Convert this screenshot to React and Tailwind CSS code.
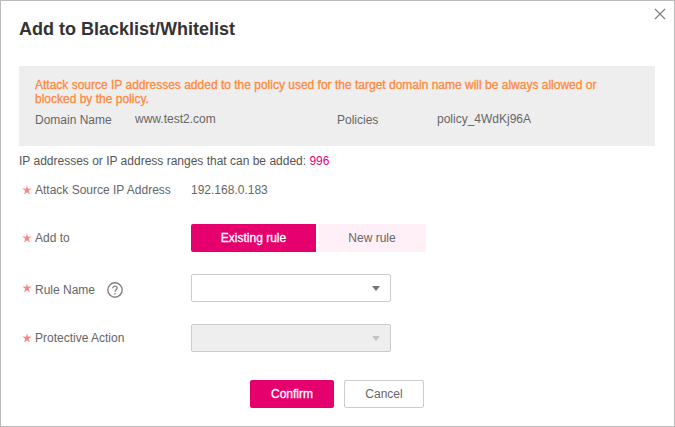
import React from "react";

const Star = () => (
  <span className="w-[16px] pl-[3px] shrink-0 flex items-center">
    <svg width="10" height="10" viewBox="0 0 10 10" className="block"><path d="M5 .2 L5.9 3.7 L9.8 3.6 L6.6 5.8 L8 9.6 L5 7.2 L2 9.6 L3.4 5.8 L.2 3.6 L4.1 3.7 Z" fill="#ff8080" /></svg>
  </span>
);

const Caret = ({ color }) => (
  <svg width="8" height="5" viewBox="0 0 8 5" className="shrink-0"><path d="M0 0H8L4 5Z" fill={color} /></svg>
);

export default function App() {
  return (
    <div className="relative w-[675px] h-[427px] bg-white border border-[#bbbbbb] font-['Liberation_Sans',Arial,sans-serif] text-[12px] text-[#666666] overflow-hidden">
      <button className="absolute right-[8px] top-[7px]" aria-label="Close">
        <svg width="12" height="12" viewBox="0 0 12 12" className="block"><path d="M1 1 L11 11 M11 1 L1 11" stroke="#808080" strokeWidth="1.2" fill="none" /></svg>
      </button>
      <div className="pl-[18px] pr-[19px] pt-[17px]">
        <h1 className="text-[18px] leading-[22px] font-bold text-[#333333]">Add to Blacklist/Whitelist</h1>
        <div className="mt-[26px] h-[80px] bg-[#eeeeee] pl-[16px] pr-[16px] pt-[12px]">
          <p className="text-[#ff8a3c] leading-[14px] [-webkit-text-stroke:0.3px]">
            Attack source IP addresses added to the policy used for the target domain name will be always allowed or blocked by the policy.
          </p>
          <div className="flex mt-[6px] leading-[14px] h-[16px]">
            <span className="w-[100px] pt-[1px]">Domain Name</span>
            <span className="w-[202px]">www.test2.com</span>
            <span className="w-[100px] pt-[1px]">Policies</span>
            <span>policy_4WdKj96A</span>
          </div>
        </div>
        <p className="mt-[8px] leading-[14px] text-[#555555]">
          IP addresses or IP address ranges that can be added: <span className="text-[#e6007a]">996</span>
        </p>
        <div className="mt-[15px] flex items-center h-[14px]">
          <Star />
          <span className="w-[156px]">Attack Source IP Address</span>
          <span>192.168.0.183</span>
        </div>
        <div className="mt-[27px] flex items-center h-[28px]">
          <Star />
          <span className="w-[156px]">Add to</span>
          <div className="flex">
            <button className="w-[125px] h-[28px] bg-[#e6006e] text-white rounded-l-[2px] [-webkit-text-stroke:0.3px]">Existing rule</button>
            <button className="ml-[2px] w-[108px] h-[28px] bg-[#fff0f7] text-[#666666] rounded-r-[2px]">New rule</button>
          </div>
        </div>
        <div className="mt-[22px] flex items-center h-[28px]">
          <Star />
          <div className="w-[156px] flex items-center pt-[4px]">
            <span>Rule Name</span>
            <svg width="16" height="16" viewBox="0 0 16 16" className="ml-[12px]"><circle cx="8" cy="8" r="7.2" stroke="#808080" strokeWidth="1.4" fill="none" /><path d="M5.8 6.2C5.8 3.4 10.2 3.5 10.2 6.1C10.2 7.8 8 7.8 8 9.8" stroke="#808080" strokeWidth="1.3" fill="none" /><rect x="7.3" y="11" width="1.4" height="1.5" fill="#808080" /></svg>
          </div>
          <div className="w-[200px] h-[28px] border border-[#cccccc] rounded-[2px] bg-white flex items-center justify-end pr-[10px]">
            <Caret color="#777777" />
          </div>
        </div>
        <div className="mt-[22px] flex items-center h-[28px]">
          <Star />
          <span className="w-[156px]">Protective Action</span>
          <div className="w-[200px] h-[28px] border border-[#cccccc] rounded-[2px] bg-[#eeeeee] flex items-center justify-end pr-[10px]">
            <Caret color="#c4c4c4" />
          </div>
        </div>
        <div className="mt-[28px] flex pl-[231px]">
          <button className="w-[84px] h-[28px] bg-[#e6006e] text-white rounded-[2px] [-webkit-text-stroke:0.3px]">Confirm</button>
          <button className="ml-[10px] w-[80px] h-[28px] border border-[#cccccc] bg-white text-[#666666] rounded-[2px]">Cancel</button>
        </div>
      </div>
    </div>
  );
}
